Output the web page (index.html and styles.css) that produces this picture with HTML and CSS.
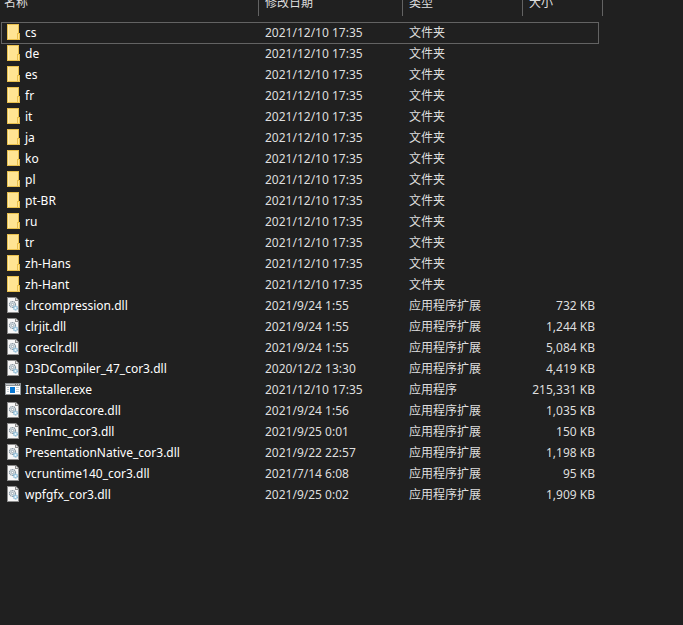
FILE: index.html
```html
<!DOCTYPE html>
<html lang="zh-CN">
<head>
<meta charset="utf-8">
<title>文件列表</title>
<link rel="stylesheet" href="styles.css">
</head>
<body>
<svg class="sprites" aria-hidden="true">
  <symbol id="folder" viewBox="0 0 16 16">
    <path d="M2 0h12v9h1v7H2z" fill="#e9c04d"/>
    <path d="M3 1h10v8h-1v6H3z" fill="#ffe492"/>
    <path d="M3 1h1v14H3z" fill="#ffedb0"/>
    <path d="M13 10h1v5h-1z" fill="#ffe492"/>
  </symbol>
  <symbol id="dll" viewBox="0 0 16 16">
    <path d="M2 0h9l3 3v13H2z" fill="#8b8b8b"/>
    <path d="M3 1h7v3h3v11H3z" fill="#f7f7f7"/>
    <path d="M11 1v2h2z" fill="#e5e5e5"/>
    <circle cx="7.5" cy="7.5" r="3" fill="#e2e8ec" stroke="#8c9aa4" stroke-width="1.2" stroke-dasharray="1.4 .5"/>
    <circle cx="7.5" cy="7.5" r="1.2" fill="#fff" stroke="#7d8f9b" stroke-width=".7"/>
    <circle cx="10.5" cy="11" r="1.9" fill="#d7edf9" stroke="#83b5d1" stroke-width="1.3" stroke-dasharray="1.4 .4"/>
    <circle cx="10.5" cy="11" r=".6" fill="#fff"/>
  </symbol>
  <symbol id="exe" viewBox="0 0 16 16">
    <path d="M0 2h16v12H0z" fill="#8c9296"/>
    <path d="M1 3h14v1H1z" fill="#c5c9cc"/>
    <path d="M10 3h1v1h-1zM12 3h1v1h-1zM14 3h1v1h-1z" fill="#777"/>
    <path d="M1 5h14v8H1z" fill="#fff"/>
    <path d="M5 6h5v6H5z" fill="#0878d4"/>
    <path d="M2 6h2v1H2zM2 8h2v1H2zM2 10h2v1H2zM11 6h3v1h-3zM11 8h3v1h-3zM11 10h3v1h-3z" fill="#c6d0d6"/>
  </symbol>
</svg>
<main>
<table class="files">
  <colgroup><col class="col-name"><col class="col-date"><col class="col-type"><col class="col-size"><col class="col-end"></colgroup>
  <thead><tr><th scope="col">名称</th><th scope="col">修改日期</th><th scope="col">类型</th><th scope="col" colspan="2">大小</th></tr></thead>
  <tbody id="rows"></tbody>
</table>
</main>
<script src="files.js"></script>
</body>
</html>
```
FILE: styles.css
```css
body {
  margin: 0;
  background: #202020;
  color: #dedede;
  font: 12px/20px "Noto Sans", "Noto Sans CJK SC", sans-serif;
}

.sprites {
  position: absolute;
  width: 0;
  height: 0;
}

main {
  min-height: 100vh;
  box-sizing: border-box;
  overflow: hidden;
}

/* The list is scrolled so that the header is partly out of view. */
.files {
  width: 602px;
  margin: -8px 0 0 1px;
  table-layout: fixed;
  border-collapse: separate;
  border-spacing: 0;
}

.col-name { width: 258px; }
.col-date { width: 144px; }
.col-type { width: 120px; }
.col-size { width: 76px; }
.col-end { width: 4px; }

th {
  height: 22px;
  padding: 0 0 2px 6px;
  border-right: 1px solid #636363;
  font-weight: 400;
  text-align: left;
}

th:first-child {
  padding-left: 3px;
}

tbody::before {
  content: "";
  display: block;
  height: 6px;
}

td {
  height: 20px;
  padding: 0 0 1px 6px;
  white-space: nowrap;
}

td:first-child {
  padding-left: 0;
}

td:last-child {
  padding: 0 4px 1px 0;
  text-align: right;
}

.name {
  display: flex;
  align-items: flex-start;
  gap: 4px;
  padding-left: 4px;
  color: #fff;
}

.name svg {
  width: 16px;
  height: 16px;
  margin-top: 1px;
}

.focused td {
  padding-bottom: 0;
  border: solid #636363;
  border-width: 1px 0;
}

.focused td:first-child {
  border-left-width: 1px;
}

.focused td:last-child {
  border-right-width: 1px;
}

.focused .name {
  margin-left: -1px;
}
```
FILE: files.js
```js
const folders = ["cs", "de", "es", "fr", "it", "ja", "ko", "pl", "pt-BR", "ru", "tr", "zh-Hans", "zh-Hant"];
const files = [
  ["clrcompression.dll", "2021/9/24 1:55", "732 KB"],
  ["clrjit.dll", "2021/9/24 1:55", "1,244 KB"],
  ["coreclr.dll", "2021/9/24 1:55", "5,084 KB"],
  ["D3DCompiler_47_cor3.dll", "2020/12/2 13:30", "4,419 KB"],
  ["Installer.exe", "2021/12/10 17:35", "215,331 KB"],
  ["mscordaccore.dll", "2021/9/24 1:56", "1,035 KB"],
  ["PenImc_cor3.dll", "2021/9/25 0:01", "150 KB"],
  ["PresentationNative_cor3.dll", "2021/9/22 22:57", "1,198 KB"],
  ["vcruntime140_cor3.dll", "2021/7/14 6:08", "95 KB"],
  ["wpfgfx_cor3.dll", "2021/9/25 0:02", "1,909 KB"]
];
const types = { folder: "文件夹", dll: "应用程序扩展", exe: "应用程序" };

const row = (icon, name, date, size) =>
  `<tr><td><div class="name"><svg aria-hidden="true"><use href="#${icon}"/></svg><span>${name}</span></div></td>` +
  `<td>${date}</td><td>${types[icon]}</td><td colspan="1">${size}</td></tr>`;

const body = document.getElementById("rows");
body.innerHTML =
  folders.map(name => row("folder", name, "2021/12/10 17:35", "")).join("") +
  files.map(([name, date, size]) => row(name.split(".").pop(), name, date, size)).join("");
body.rows[0].className = "focused";
```
